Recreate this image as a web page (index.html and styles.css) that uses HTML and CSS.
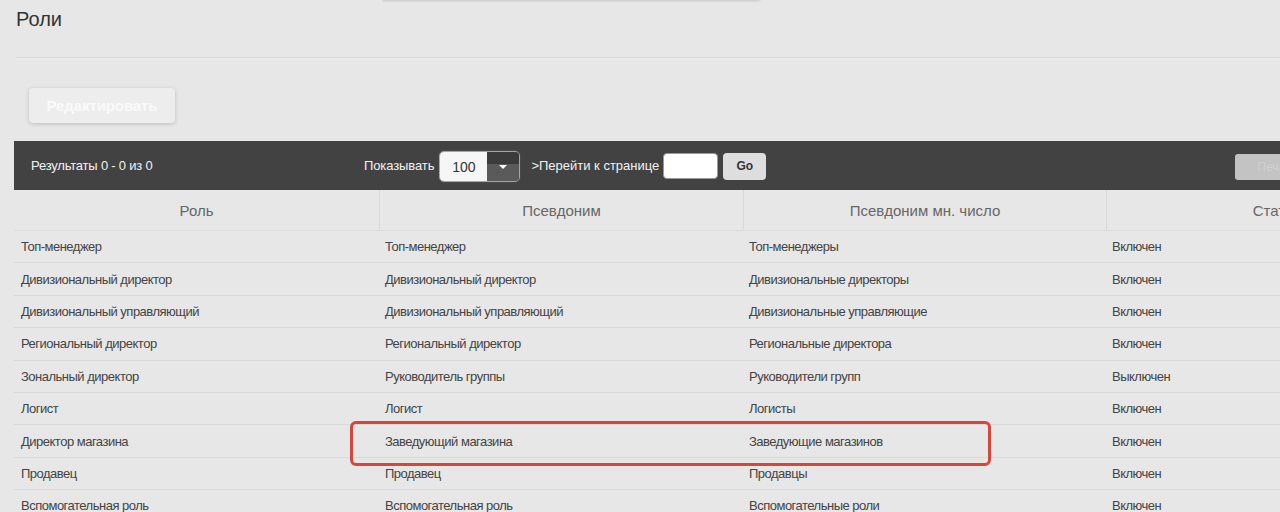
FILE: index.html
```html
<!DOCTYPE html>
<html lang="ru">
<head>
<meta charset="utf-8">
<title>Роли</title>
<link rel="stylesheet" href="styles.css">
</head>
<body>
<div class="top-menu"></div>
<div class="page">
  <h1 class="title">Роли</h1>
  <div class="rule"></div>
  <button class="edit-btn" type="button">Редактировать</button>

  <div class="grid">
    <div class="toolbar">
      <div class="results">Результаты 0 - 0 из 0</div>
      <div class="show">
        <span class="show-label">Показывать</span>
        <div class="select">
          <span class="select-value">100</span>
          <span class="select-arrow"><span class="caret"></span></span>
        </div>
      </div>
      <div class="goto">
        <span class="goto-label">&gt;Перейти к странице</span>
        <span class="page-input"></span>
        <button class="go-btn" type="button">Go</button>
      </div>
      <button class="print-btn" type="button">Печать</button>
    </div>

    <div class="table">
      <div class="row head">
        <div class="cell">Роль</div>
        <div class="cell">Псевдоним</div>
        <div class="cell">Псевдоним мн. число</div>
        <div class="cell">Статус</div>
      </div>
      <div class="row"><div class="cell">Топ-менеджер</div><div class="cell">Топ-менеджер</div><div class="cell">Топ-менеджеры</div><div class="cell">Включен</div></div>
      <div class="row"><div class="cell">Дивизиональный директор</div><div class="cell">Дивизиональный директор</div><div class="cell">Дивизиональные директоры</div><div class="cell">Включен</div></div>
      <div class="row"><div class="cell">Дивизиональный управляющий</div><div class="cell">Дивизиональный управляющий</div><div class="cell">Дивизиональные управляющие</div><div class="cell">Включен</div></div>
      <div class="row"><div class="cell">Региональный директор</div><div class="cell">Региональный директор</div><div class="cell">Региональные директора</div><div class="cell">Включен</div></div>
      <div class="row"><div class="cell">Зональный директор</div><div class="cell">Руководитель группы</div><div class="cell">Руководители групп</div><div class="cell">Выключен</div></div>
      <div class="row"><div class="cell">Логист</div><div class="cell">Логист</div><div class="cell">Логисты</div><div class="cell">Включен</div></div>
      <div class="row"><div class="cell">Директор магазина</div><div class="cell">Заведующий магазина</div><div class="cell">Заведующие магазинов</div><div class="cell">Включен</div></div>
      <div class="row"><div class="cell">Продавец</div><div class="cell">Продавец</div><div class="cell">Продавцы</div><div class="cell">Включен</div></div>
      <div class="row"><div class="cell">Вспомогательная роль</div><div class="cell">Вспомогательная роль</div><div class="cell">Вспомогательные роли</div><div class="cell">Включен</div></div>
    </div>
  </div>
</div>
<div class="highlight"></div>
</body>
</html>
```

FILE: styles.css
```css
html, body {
  margin: 0;
  padding: 0;
  overflow: hidden;
  background: #e7e7e7;
  font-family: "Liberation Sans", Arial, sans-serif;
  color: #444;
}

.top-menu {
  position: absolute;
  left: 383px;
  top: -20px;
  width: 377px;
  height: 20px;
  background: #e4e4e4;
  box-shadow: 0 1px 2px rgba(0, 0, 0, 0.15);
}

.page {
  width: 1460px;
  padding: 5px 0 0 14px;
}

.title {
  margin: 0 0 0 2px;
  font-size: 20px;
  font-weight: normal;
  line-height: 28px;
  color: #333;
}

.rule {
  margin: 24px 0 0 2px;
  height: 1px;
  background: #d6d6d6;
  border-bottom: 1px solid #eeeeee;
}

.edit-btn {
  display: block;
  margin: 29px 0 0 15px;
  width: 146px;
  height: 35px;
  border: 0;
  border-radius: 4px;
  background: #ededed;
  box-shadow: 0 1px 4px rgba(0, 0, 0, 0.18);
  color: #fafafa;
  font-family: "Liberation Sans", Arial, sans-serif;
  font-size: 15px;
  font-weight: bold;
  letter-spacing: -0.1px;
  padding: 0;
}

.grid {
  margin-top: 18px;
}

.toolbar {
  height: 49px;
  background: #424242;
  display: flex;
  align-items: center;
  color: #f2f2f2;
  font-size: 13px;
}

.results {
  margin-left: 17px;
  width: 333px;
  letter-spacing: -0.2px;
}

.show {
  display: flex;
  align-items: center;
}

.show-label {
  letter-spacing: -0.1px;
}

.select {
  margin-left: 5px;
  width: 79px;
  height: 29px;
  display: flex;
  border: 1px solid #a5a5a5;
  border-radius: 5px;
  overflow: hidden;
  box-shadow: 0 0 1px rgba(255, 255, 255, 0.4);
  margin-top: 2px;
}

.select-value {
  flex: 0 0 47px;
  background: #f6f6f6;
  color: #333;
  font-size: 14px;
  display: flex;
  align-items: center;
  justify-content: center;
}

.select-arrow {
  flex: 1;
  background: linear-gradient(#3b3b3b 0, #3b3b3b 40%, #5a5a5a 40%, #5a5a5a 100%);
  display: flex;
  align-items: center;
  justify-content: center;
}

.caret {
  width: 0;
  height: 0;
  border-left: 4px solid transparent;
  border-right: 4px solid transparent;
  border-top: 4px solid #ffffff;
}

.goto {
  display: flex;
  align-items: center;
  margin-left: 11px;
}

.goto-label {
  letter-spacing: 0;
}

.page-input {
  display: block;
  width: 53px;
  height: 24px;
  margin-left: 4px;
  background: #ffffff;
  border: 1px solid #999;
  border-radius: 4px;
  margin-top: 1px;
}

.go-btn {
  margin-left: 5px;
  width: 43px;
  height: 27px;
  border: 0;
  border-radius: 4px;
  background: #dedede;
  color: #333;
  font-family: "Liberation Sans", Arial, sans-serif;
  font-size: 12px;
  font-weight: bold;
  padding: 0;
  margin-top: 1px;
}

.print-btn {
  margin-left: 469px;
  width: 110px;
  height: 26px;
  border: 0;
  border-radius: 3px;
  background: #c3c3c3;
  color: #d0d0d0;
  font-family: "Liberation Sans", Arial, sans-serif;
  font-size: 12px;
  padding: 0;
  text-align: left;
  text-indent: 22px;
  margin-top: 3px;
}

.row {
  display: grid;
  grid-template-columns: 365px 364px 363px 340px;
  height: 32.4px;
  border-bottom: 1px solid #d9d9d9;
  box-sizing: border-box;
}

.row .cell {
  display: flex;
  align-items: center;
  padding-left: 6px;
  font-size: 13px;
  letter-spacing: -0.5px;
  color: #444;
  white-space: nowrap;
}

.row .cell:first-child {
  padding-left: 7px;
}

.row.head {
  height: 41px;
  border-bottom: 1px solid #dcdcdc;
}

.row.head .cell {
  justify-content: center;
  padding-left: 0;
  font-size: 15px;
  letter-spacing: 0;
  color: #666;
  border-left: 1px solid #d9d9d9;
}

.row.head .cell:first-child {
  border-left: 0;
}

.highlight {
  position: absolute;
  left: 350px;
  top: 421px;
  width: 635px;
  height: 39px;
  border: 3px solid #d8453b;
  border-radius: 6px;
}
```
